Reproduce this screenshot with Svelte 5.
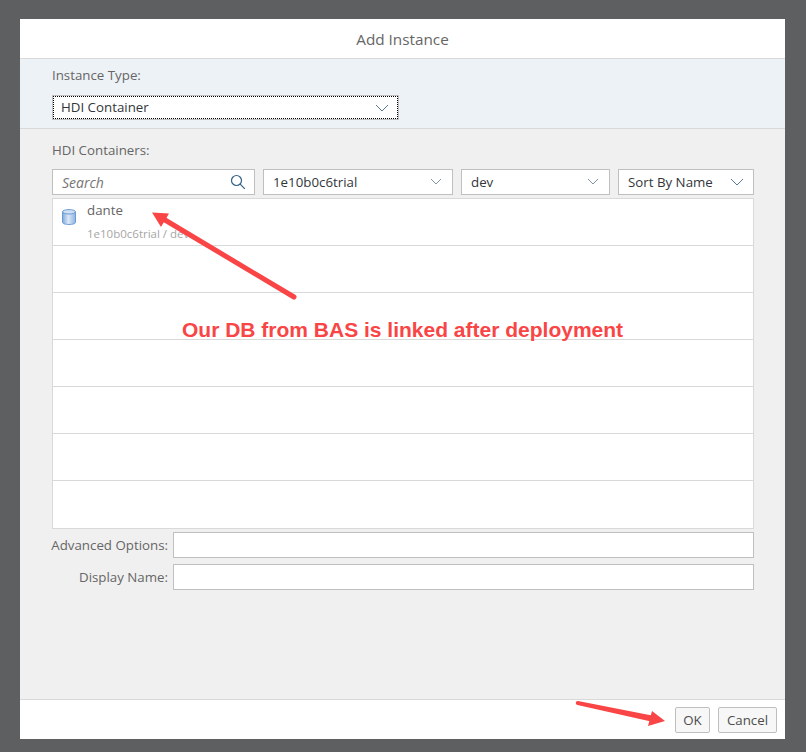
<script>
  const emptyRows = [1, 2, 3, 4, 5, 6];
</script>

<div class="overlay">
  <div class="dialog">
    <header class="title">Add Instance</header>

    <section class="type-band">
      <label class="band-label" for="type">Instance Type:</label>
      <div class="select type-select" id="type">
        <span>HDI Container</span>
        <svg class="chevron big" viewBox="0 0 14 8"><path d="M1 1l6 6 6-6" /></svg>
      </div>
    </section>

    <section class="content">
      <div class="list-label">HDI Containers:</div>
      <div class="filters">
        <div class="select search">
          <em>Search</em>
          <svg class="search-icon" viewBox="0 0 16 16">
            <circle cx="6.500" cy="6.500" r="5" />
            <path d="M10.200 10.200l4.600 4.600" />
          </svg>
        </div>
        <div class="select space">
          <span>1e10b0c6trial</span>
          <svg class="chevron" viewBox="0 0 14 8"><path d="M2 1l5 5 5-5" /></svg>
        </div>
        <div class="select org">
          <span>dev</span>
          <svg class="chevron" viewBox="0 0 14 8"><path d="M2 1l5 5 5-5" /></svg>
        </div>
        <div class="select sort">
          <span>Sort By Name</span>
          <svg class="chevron big" viewBox="0 0 14 8"><path d="M1 1l6 6 6-6" /></svg>
        </div>
      </div>

      <div class="list">
        <div class="row first">
          <svg class="db" viewBox="0 0 14 16">
            <defs>
              <linearGradient id="dbfill" x1="0" x2="1" y1="0" y2="0">
                <stop offset="0" stop-color="#7fa9dc" />
                <stop offset="0.45" stop-color="#dbe8f6" />
                <stop offset="1" stop-color="#8db3e0" />
              </linearGradient>
            </defs>
            <path class="db-body" d="M.5 3v10.500c0 1.100 2.900 2 6.500 2s6.500-.9 6.500-2v-10.500z" />
            <ellipse class="db-top" cx="7" cy="2.800" rx="6.500" ry="2.200" />
          </svg>
          <div class="row-text">
            <div class="name">dante</div>
            <div class="path">1e10b0c6trial / dev</div>
          </div>
        </div>
        {#each emptyRows as r (r)}
          <div class="row"></div>
        {/each}
      </div>

      <div class="field first-field">
        <span class="field-label">Advanced Options:</span>
        <div class="input"></div>
      </div>
      <div class="field">
        <span class="field-label">Display Name:</span>
        <div class="input"></div>
      </div>
    </section>

    <footer class="actions">
      <button class="ok">OK</button>
      <button>Cancel</button>
    </footer>
  </div>

  <svg class="arrows" viewBox="0 0 806 752">
    <path class="shaft" d="M294 297L165 220" />
    <path class="head" d="M152 212.500L169 213.500L161 227z" />
    <path class="head" d="M578 701L652 715.500L651 721.500L577.500 705a2 2 0 0 1 .5 -4z" />
    <path class="head" d="M665 721L652 711L648 726z" />
  </svg>

  <div class="note">Our DB from BAS is linked after deployment</div>
</div>

<style>
  :global(body) {
    margin: 0;
  }

  .overlay {
    position: relative;
    box-sizing: border-box;
    width: 806px;
    height: 752px;
    padding: 19px 21px 13px 20px;
    background: #5e5f61;
    font-family: "Open Sans", "Noto Sans", sans-serif;
    font-size: 13.300px;
    color: #32363a;
    overflow: hidden;
  }

  .dialog {
    display: flex;
    flex-direction: column;
    height: 720px;
    background: #f0f0f0;
    border-radius: 2px;
  }

  .title {
    height: 39px;
    line-height: 41px;
    flex: none;
    text-align: center;
    font-size: 15.300px;
    color: #666;
    background: #fff;
    border-bottom: 1px solid #d9d9d9;
  }

  .type-band {
    box-sizing: border-box;
    height: 70px;
    flex: none;
    padding: 0 32px;
    background: #edf2f6;
    border-bottom: 1px solid #d9d9d9;
  }

  .band-label {
    display: block;
    height: 36px;
    line-height: 32px;
    color: #666;
  }

  .select {
    display: flex;
    align-items: center;
    justify-content: space-between;
    box-sizing: border-box;
    height: 26px;
    padding: 0 9px;
    background: #fff;
    border: 1px solid #bfbfbf;
    color: #32363a;
  }

  .type-select {
    width: 347px;
    height: 25px;
    padding: 0 9px 2px 8px;
    outline: 1px dotted #000;
    outline-offset: -2px;
  }

  .chevron {
    width: 14px;
    height: 8px;
    flex: none;
    fill: none;
    stroke: #7f95a8;
    stroke-width: 1;
  }

  .chevron.big {
    stroke: #5a7a9a;
  }

  .type-select .chevron {
    margin-top: 3px;
  }

  .content {
    flex: 1;
    padding: 0 31px 0 32px;
  }

  .list-label {
    height: 40px;
    line-height: 43px;
    color: #666;
  }

  .filters {
    display: flex;
    gap: 8px;
    height: 26px;
  }

  .search {
    width: 203px;
  }

  .search em {
    font-size: 14px;
    color: #757575;
  }

  .search-icon {
    width: 16px;
    height: 16px;
    fill: none;
    stroke: #346187;
    stroke-width: 1.200;
    margin-right: -1px;
  }

  .space {
    width: 190px;
  }

  .org {
    width: 149px;
  }

  .sort {
    width: 136px;
  }

  .list {
    box-sizing: border-box;
    height: 331px;
    margin-top: 3px;
    background: #fff;
    border: 1px solid #d9d9d9;
  }

  .row {
    box-sizing: border-box;
    height: 47px;
    border-top: 1px solid #d9d9d9;
  }

  .row.first {
    height: 46px;
    border-top: 0;
    display: flex;
    padding-left: 9px;
  }

  .db {
    width: 14px;
    height: 16px;
    margin-top: 10px;
    flex: none;
  }

  .db-body {
    fill: url(#dbfill);
    stroke: #6c9bd4;
  }

  .db-top {
    fill: #cfe0f3;
    stroke: #6c9bd4;
  }

  .row-text {
    margin-left: 11px;
  }

  .name {
    height: 23px;
    line-height: 23px;
    color: #666;
  }

  .path {
    margin-top: 4px;
    line-height: 16px;
    font-size: 11.500px;
    color: #a6a6a6;
  }

  .field {
    display: flex;
    align-items: center;
    margin-top: 6px;
    margin-left: -1px;
  }

  .first-field {
    margin-top: 3px;
  }

  .field-label {
    width: 117px;
    margin-right: 5px;
    text-align: right;
    color: #666;
    white-space: nowrap;
  }

  .input {
    box-sizing: border-box;
    flex: 1;
    height: 26px;
    background: #fff;
    border: 1px solid #bfbfbf;
  }

  .actions {
    box-sizing: border-box;
    height: 40px;
    flex: none;
    display: flex;
    align-items: center;
    justify-content: flex-end;
    gap: 8px;
    padding: 1px 8px 0 0;
    background: #fff;
    border-top: 1px solid #d9d9d9;
  }

  button {
    height: 26px;
    padding: 0 8px;
    font: inherit;
    color: #4d4d4d;
    background: #f7f7f7;
    border: 1px solid #bfbfbf;
    border-radius: 2px;
  }

  .ok {
    width: 35px;
    padding: 0;
  }

  .arrows {
    position: absolute;
    inset: 0;
    width: 806px;
    height: 752px;
    pointer-events: none;
  }

  .shaft {
    fill: none;
    stroke: #f94545;
    stroke-width: 5;
    stroke-linecap: round;
  }

  .head {
    fill: #f94545;
  }

  .note {
    position: absolute;
    left: 182px;
    top: 317px;
    font-family: "Liberation Sans", Arial, sans-serif;
    font-size: 21px;
    font-weight: 700;
    line-height: 26px;
    color: #f94545;
    white-space: nowrap;
  }
</style>
